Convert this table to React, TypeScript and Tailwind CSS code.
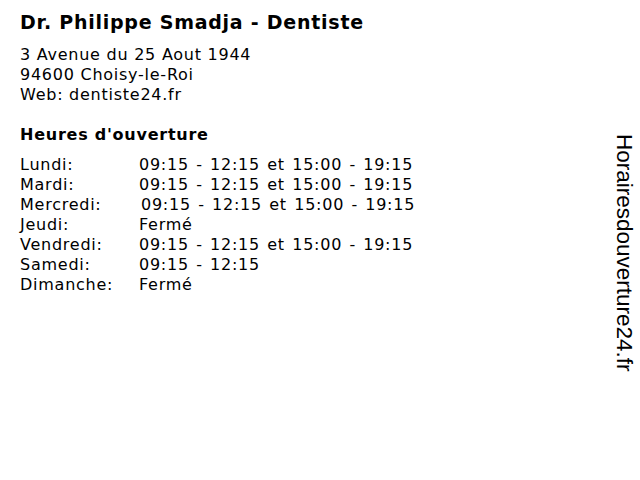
const hours = [
  { day: 'Lundi:', time: '09:15 - 12:15 et 15:00 - 19:15' },
  { day: 'Mardi:', time: '09:15 - 12:15 et 15:00 - 19:15' },
  { day: 'Mercredi:', time: '09:15 - 12:15 et 15:00 - 19:15', shift: true },
  { day: 'Jeudi:', time: 'Fermé' },
  { day: 'Vendredi:', time: '09:15 - 12:15 et 15:00 - 19:15' },
  { day: 'Samedi:', time: '09:15 - 12:15' },
  { day: 'Dimanche:', time: 'Fermé' },
];

export default function App() {
  return (
    <div className="flex h-[480px] w-[640px] bg-white text-black font-['DejaVu_Sans',sans-serif] tracking-[0.75px]">
      <div className="flex-1 pl-5 pt-[10px]">
        <h1 className="text-[19px] font-bold leading-6">Dr. Philippe Smadja - Dentiste</h1>
        <div className="mt-[11px] text-[16px] leading-5">
          <p>3 Avenue du 25 Aout 1944</p>
          <p>94600 Choisy-le-Roi</p>
          <p>Web: dentiste24.fr</p>
        </div>
        <h2 className="mt-[20px] text-[16px] font-bold leading-5">Heures d'ouverture</h2>
        <div className="mt-[10px] text-[16px] leading-5">
          {hours.map((h) => (
            <div key={h.day} className="flex">
              <span className="w-[119px]">{h.day}</span>
              <span className={h.shift ? 'pl-[2px] [word-spacing:1.5px]' : '[word-spacing:1.5px]'}>{h.time}</span>
            </div>
          ))}
        </div>
      </div>
      <div className="flex w-[40px] items-start justify-center pl-[8px] pt-[134px]">
        <span className="font-['Liberation_Sans',sans-serif] text-[22.5px] leading-5 tracking-normal [writing-mode:vertical-rl]">
          Horairesdouverture24.fr
        </span>
      </div>
    </div>
  );
}
